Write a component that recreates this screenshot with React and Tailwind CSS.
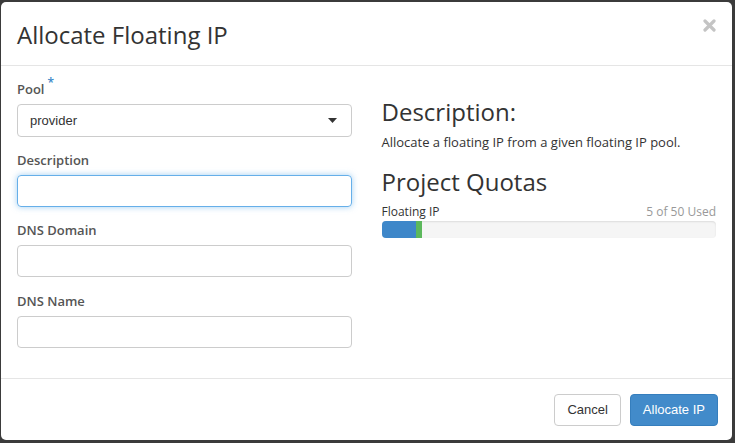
export default function App() {
  return (
    <div className="w-[735px] h-[443px] bg-[#3b3b3b] pt-[2px] pl-[1px] overflow-hidden" style={{ fontFamily: '"Open Sans", sans-serif' }}>
      <div className="w-[731px] h-[438px] bg-white rounded-[5px] flex flex-col">
        {/* header */}
        <div className="h-[64px] border-b border-[#e5e5e5] flex items-center justify-between pl-[16px] pr-[16px]">
          <h1 className="text-[24px] font-medium text-[#333] leading-none mt-[2px]">Allocate Floating IP</h1>
          <svg width="13" height="13" viewBox="0 0 13 13" className="-mt-[16px]">
            <path d="M2 2L11 11M11 2L2 11" stroke="#c4c4c4" strokeWidth="3.2" strokeLinecap="round" />
          </svg>
        </div>

        {/* body */}
        <div className="flex-1 flex px-[16px] pt-[14px]">
          <div className="w-[335px] flex flex-col">
            <label className="text-[13px] font-semibold text-[#555] leading-[18px] flex">
              Pool<span className="text-[#3a87c8] text-[12px] ml-[3px] -mt-[6px]">*</span>
            </label>
            <div className="mt-[6px] h-[33px] border border-[#ccc] rounded-[4px] flex items-center justify-between pl-[12px] pr-[14px]">
              <span className="text-[13px] text-[#333]" style={{ fontFamily: '"Liberation Sans", Arial, sans-serif' }}>provider</span>
              <svg width="9" height="5" viewBox="0 0 9 5"><path d="M0 0h9L4.5 5z" fill="#333" /></svg>
            </div>

            <label className="mt-[14px] text-[13px] font-semibold text-[#555] leading-[18px]">Description</label>
            <div className="mt-[6px] h-[32px] border border-[#66afe9] rounded-[4px] shadow-[0_0_6px_rgba(102,175,233,0.6)]" />

            <label className="mt-[14px] text-[13px] font-semibold text-[#555] leading-[18px]">DNS Domain</label>
            <div className="mt-[6px] h-[32px] border border-[#ccc] rounded-[4px]" />

            <label className="mt-[15px] text-[13px] font-semibold text-[#555] leading-[18px]">DNS Name</label>
            <div className="mt-[6px] h-[32px] border border-[#ccc] rounded-[4px]" />
          </div>

          <div className="w-[335px] ml-[30px] flex flex-col pt-[17px]">
            <h2 className="text-[24px] font-medium text-[#333] leading-[30px]">Description:</h2>
            <p className="mt-[6px] text-[13px] text-[#333] leading-[18px]">Allocate a floating IP from a given floating IP pool.</p>
            <h2 className="mt-[16px] text-[24px] font-medium text-[#333] leading-[30px]">Project Quotas</h2>
            <div className="mt-[7px] flex justify-between text-[12px] leading-[16px]">
              <span className="text-[#333]">Floating IP</span>
              <span className="text-[#999]">5 of 50 Used</span>
            </div>
            <div className="mt-[1px] h-[17px] bg-[#f5f5f5] rounded-[4px] flex overflow-hidden shadow-[inset_0_1px_2px_rgba(0,0,0,0.1)]">
              <div className="w-[34px] bg-[#3e87c9]" />
              <div className="w-[6px] bg-[#5cb85c]" />
            </div>
          </div>
        </div>

        {/* footer */}
        <div className="h-[62px] border-t border-[#e5e5e5] flex items-start justify-end pr-[14px] pt-[15px] gap-[9px]" style={{ fontFamily: '"Liberation Sans", Arial, sans-serif' }}>
          <button className="h-[32px] px-[12px] border border-[#ccc] rounded-[4px] bg-white text-[13px] text-[#333]">Cancel</button>
          <button className="h-[32px] px-[12px] border border-[#357ebd] rounded-[4px] bg-[#428bca] text-[13px] text-white">Allocate IP</button>
        </div>
      </div>
    </div>
  );
}
